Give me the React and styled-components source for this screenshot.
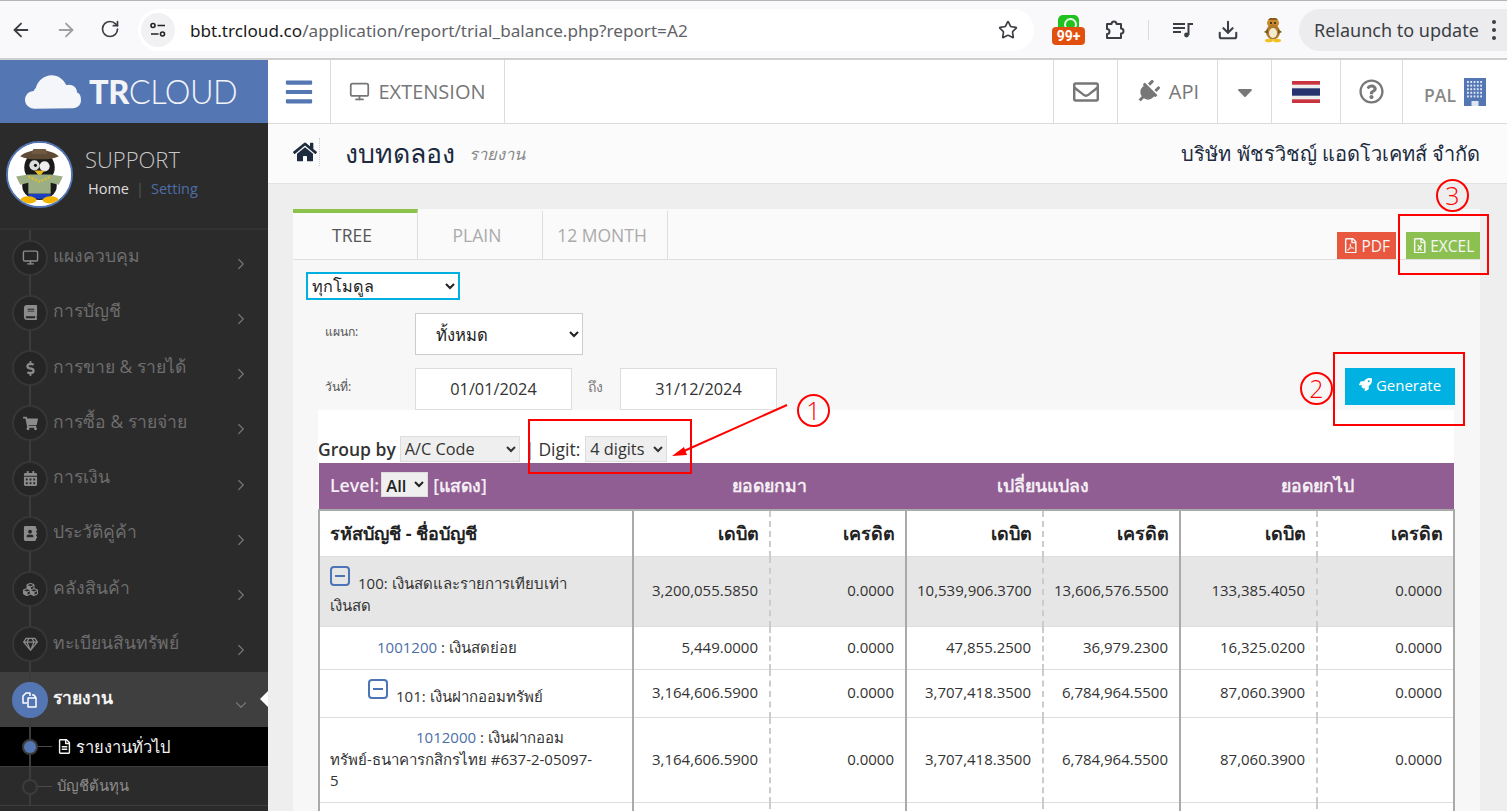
import React from 'react';
import styled, { createGlobalStyle } from 'styled-components';
import { ArrowLeft, ArrowRight, RotateCw, Star, Download, Monitor, ChevronRight, ChevronDown } from 'lucide-react';
import {
  FaHome, FaPlug, FaRocket, FaShoppingCart, FaDollarSign, FaBook, FaCubes, FaRegEnvelope,
  FaRegQuestionCircle, FaBars, FaRegFilePdf, FaRegFileExcel, FaRegFileAlt,
  FaCalendarAlt, FaAddressBook, FaRegGem, FaCaretDown,
} from 'react-icons/fa';

const SANS = `'Open Sans', 'Noto Sans', sans-serif`;

const Global = createGlobalStyle`
  html, body { margin: 0; padding: 0; height: 100%; overflow: hidden; }
  body { font-family: ${SANS}; font-size: 15px; color: #333; background: #eee; }
  * { box-sizing: border-box; }
`;

const Screen = styled.div`
  position: relative;
  width: 1507px;
  height: 811px;
  overflow: hidden;
  display: flex;
  flex-direction: column;
`;

/* browser chrome */
const Toolbar = styled.div`
  flex: 0 0 60px;
  display: flex;
  align-items: center;
  background: #f9f9fb;
  border-top: 1px solid #b5b5b5;
  border-bottom: 2px solid #cfcfcf;
  padding: 1px 0 0 10px;
  color: #3b3f44;
`;

const NavBtn = styled.div`
  width: 22px;
  height: 22px;
  margin-right: ${p => p.$gap ?? 23}px;
  color: ${p => p.$dim ? '#a0a0a0' : '#3b3f44'};
  display: flex;
`;

const Omnibox = styled.div`
  flex: 0 0 896px;
  height: 42px;
  margin-left: -1px;
  background: #fff;
  border-radius: 21px;
  display: flex;
  align-items: center;
  padding: 0 16px 0 3px;
  font-family: 'Noto Sans', sans-serif;
  font-size: 17.15px;
`;

const TuneBadge = styled.div`
  width: 34px;
  height: 34px;
  border-radius: 50%;
  background: #f1f1f3;
  display: flex;
  align-items: center;
  justify-content: center;
  margin-right: 15px;
`;

const Host = styled.span` color: #1a1a1a; `;
const UrlPath = styled.span` color: #5f6368; flex: 1; `;

const ExtIcons = styled.div`
  display: flex;
  align-items: center;
  flex: 1;
  margin-left: 18px;
`;

const ExtBadge = styled.div`
  position: relative;
  width: 34px;
  height: 30px;
  margin-right: 17px;
`;

const LineTop = styled.div`
  position: absolute;
  left: 6px;
  top: 0;
  width: 21px;
  height: 14px;
  background: #1fc21f;
  border-radius: 5px 5px 0 0;
  &::after {
    content: '';
    position: absolute;
    left: 6px;
    top: 3px;
    width: 9px;
    height: 9px;
    border: 2px solid #e9fbe9;
    border-radius: 50%;
  }
`;

const Count = styled.div`
  position: absolute;
  left: 0;
  bottom: 0;
  width: 33px;
  height: 18px;
  border-radius: 4px;
  background: #e2500f;
  color: #fff;
  font-family: 'Roboto', sans-serif;
  font-weight: 700;
  font-size: 14px;
  line-height: 18px;
  text-align: center;
`;

const ToolSep = styled.div`
  width: 1px;
  height: 20px;
  background: #dcdcdc;
  margin: 0 24px 0 23px;
`;

const MusicSlot = styled.div`
  display: flex;
  margin-right: 24px;
`;

const AvatarSlot = styled.div`
  display: flex;
`;

const Relaunch = styled.div`
  margin-left: 15px;
  flex: 0 0 208px;
  height: 42px;
  border-radius: 21px 0 0 21px;
  background: #ececee;
  display: flex;
  align-items: center;
  padding-left: 15px;
  font-family: 'Noto Sans', sans-serif;
  font-size: 18px;
  color: #3b3f44;
`;

const Dots = styled.div`
  margin-left: 13px;
  display: flex;
  flex-direction: column;
  gap: 4px;
  span { width: 4px; height: 4px; border-radius: 50%; background: #3b3f44; }
`;

/* page */
const Page = styled.div`
  flex: 1;
  display: flex;
  min-height: 0;
`;

const Sidebar = styled.aside`
  flex: 0 0 268px;
  background: #2b2b2b;
  display: flex;
  flex-direction: column;
`;

const Logo = styled.div`
  flex: 0 0 63px;
  background: #5476b3;
  display: flex;
  align-items: center;
  padding-left: 25px;
  color: #f2f4f8;
  font-family: 'Lato', 'Open Sans', sans-serif;
  font-size: 32.5px;
  letter-spacing: -0.5px;
  b { font-weight: 900; margin-left: 8px; }
  span { font-weight: 300; }
`;

const Profile = styled.div`
  flex: 0 0 107px;
  display: flex;
  padding: 18px 0 0 6px;
  border-bottom: 2px solid #333;
`;

const Avatar = styled.div`
  width: 67px;
  height: 67px;
  border-radius: 50%;
  border: 2px solid #5476b3;
  background: #fff;
  overflow: hidden;
  margin-right: 12px;
  svg { display: block; }
`;

const UserName = styled.div`
  font-size: 22px;
  font-weight: 300;
  color: #c8c8c8;
  line-height: 30px;
  margin-top: 3px;
`;

const UserLinks = styled.div`
  font-size: 14.5px;
  color: #ddd;
  padding-left: 3px;
  margin-top: 5px;
  i { font-style: normal; color: #555; margin: 0 7px; }
  a { color: #4d6ea8; }
`;

const Menu = styled.div`
  flex: 1;
  overflow: hidden;
`;

const MenuRow = styled.div`
  position: relative;
  height: ${p => p.$active ? 55 : 55.25}px;
  display: flex;
  align-items: center;
  padding-left: 12px;
  color: ${p => p.$active ? '#f4f4f4' : '#6e6e6e'};
  background: ${p => p.$active ? '#3f3f3f' : 'transparent'};
  font-size: 17.5px;
  font-weight: ${p => p.$active ? 600 : 400};
  &::before {
    content: '';
    position: absolute;
    left: 29px;
    top: 0;
    bottom: 0;
    width: 2px;
    background: #3c3c3c;
  }
`;

const Bullet = styled.div`
  position: relative;
  width: 36px;
  height: 36px;
  border-radius: 50%;
  background: ${p => p.$active ? '#5476b3' : '#252525'};
  border: 2px solid ${p => p.$active ? '#5476b3' : '#363636'};
  color: ${p => p.$active ? '#fff' : '#8c8c8c'};
  display: flex;
  align-items: center;
  justify-content: center;
  margin-right: 5px;
  font-size: 15px;
`;

const MenuLabel = styled.span`
  flex: 1;
  margin-top: -3px;
`;

const Chevron = styled.span`
  color: #757575;
  width: 36px;
  display: flex;
  margin-top: ${p => p.$open ? 11 : 12}px;
`;

const Notch = styled.div`
  position: absolute;
  right: 0;
  top: 19px;
  width: 0;
  height: 0;
  border-top: 8px solid transparent;
  border-bottom: 8px solid transparent;
  border-right: 8px solid #fff;
`;

const SubRow = styled.div`
  position: relative;
  height: ${p => p.$active ? 40 : 39}px;
  display: flex;
  align-items: center;
  padding-left: 57px;
  font-size: ${p => p.$active ? 16.5 : 14.8}px;
  color: ${p => p.$active ? '#f4f4f4' : '#8d8d8d'};
  background: ${p => p.$active ? '#000' : '#2b2b2b'};
  border-bottom: 1px solid #3d3d3d;
  svg { margin-right: 4px; }
  &::before {
    content: '';
    position: absolute;
    left: 29px;
    top: 0;
    bottom: 0;
    width: 2px;
    background: #3c3c3c;
  }
  &::after {
    content: '';
    position: absolute;
    left: 24px;
    top: 14px;
    width: 12px;
    height: 12px;
    border-radius: 50%;
    background: ${p => p.$active ? '#5476b3' : '#2b2b2b'};
    box-shadow: 0 0 0 2px #3c3c3c;
  }
`;

const SubTick = styled.span`
  position: absolute;
  left: 36px;
  top: 19px;
  width: 16px;
  height: 1px;
  background: #4a4a4a;
`;

const Main = styled.main`
  flex: 1;
  display: flex;
  flex-direction: column;
  min-width: 0;
`;

const TopNav = styled.div`
  flex: 0 0 64px;
  display: flex;
  background: #fff;
  border-bottom: 1px solid #dcdcdc;
  color: #777;
`;

const NavCell = styled.div`
  flex: 0 0 ${p => p.$w}px;
  display: flex;
  align-items: center;
  justify-content: center;
  gap: ${p => p.$gap || 0}px;
  border-right: ${p => p.$last ? 'none' : '1px solid #dcdcdc'};
  border-left: ${p => p.$first ? '1px solid #dcdcdc' : 'none'};
  font-size: 20px;
`;

const NavSpacer = styled.div` flex: 1; `;

const Burger = styled(FaBars)`
  color: #5476b3;
  font-size: 30px;
`;

const PlugIcon = styled(FaPlug)`
  transform: rotate(45deg);
`;

const OrgName = styled.span`
  font-size: 17.5px;
  font-weight: 600;
  color: #888;
  margin-top: 6px;
`;

const TitleBar = styled.div`
  flex: 0 0 60px;
  background: #fbfbfb;
  border-bottom: 1px solid #e3e3e3;
  display: flex;
  align-items: center;
  padding: 0 27px 0 25px;
  color: #1c2b3e;
`;

const HomeBtn = styled.div`
  font-size: 24px;
  width: 27px;
  height: 28px;
  display: flex;
  align-items: center;
  border-right: 1px dotted #ccc;
  margin-right: 25px;
  margin-top: -4px;
`;

const PageTitle = styled.h1`
  margin: 0 14px 0 0;
  font-size: 26.7px;
  font-weight: 400;
`;

const PageSub = styled.span`
  font-style: italic;
  font-size: 16.5px;
  color: #8a8a8a;
  flex: 1;
`;

const Company = styled.span`
  font-size: 20px;
`;

const Content = styled.div`
  flex: 1;
  padding: 25px 27px 0 25px;
  background: #eee;
  min-height: 0;
`;

const Panel = styled.div`
  background: #f7f7f7;
  height: 100%;
`;

const TabRow = styled.div`
  height: 51px;
  display: flex;
  background: #fafafa;
  border-bottom: 1px solid #dedede;
`;

const Tab = styled.div`
  flex: 0 0 125px;
  display: flex;
  align-items: center;
  justify-content: center;
  border-right: 1px solid #dedede;
  border-top: 4px solid ${p => p.$active ? '#8bc34a' : 'transparent'};
  background: ${p => p.$active ? '#fafafa' : 'transparent'};
  color: ${p => p.$active ? '#555' : '#aaa'};
  font-size: 17.5px;
  padding: 0 6px 3px 0;
`;

const ExportGroup = styled.div`
  margin-left: auto;
  align-self: flex-end;
  display: flex;
  gap: 10px;
`;

const ExportBtn = styled.div`
  width: ${p => p.$w}px;
  height: 27px;
  background: ${p => p.$bg};
  color: #f5f5f5;
  font-size: 15.5px;
  display: flex;
  align-items: center;
  justify-content: center;
  gap: 3px;
`;

const ModuleSelect = styled.select`
  display: block;
  width: 154px;
  height: 28px;
  margin: 12px 0 0 13px;
  border: 2px solid #00b0e0;
  background: #fff;
  border-radius: 0;
  font-family: ${SANS};
  font-size: 16.2px;
  color: #222;
`;

const FormRow = styled.div`
  display: flex;
  align-items: flex-start;
  margin-top: ${p => p.$mt}px;
  padding-left: 32px;
  padding-right: 25px;
`;

const FormLabel = styled.label`
  flex: 0 0 90px;
  font-size: 12.2px;
  color: #555;
  padding-top: 9px;
`;

const DeptSelect = styled.select`
  width: 168px;
  height: 42px;
  border: 1px solid #ccc;
  background: #fff;
  border-radius: 0;
  padding-left: 16px;
  font-family: ${SANS};
  font-size: 16.6px;
  color: #222;
`;

const DateInput = styled.input`
  width: ${p => p.$w}px;
  height: 42px;
  border: 1px solid #ddd;
  background: #fff;
  text-align: center;
  font-family: ${SANS};
  font-size: 16.3px;
  color: #333;
`;

const ToLabel = styled.span`
  width: 48px;
  font-size: 14px;
  color: #777;
  padding: 8px 0 0 16px;
`;

const GenerateBtn = styled.div`
  margin-left: auto;
  width: 110px;
  height: 37px;
  background: #00b1e1;
  color: #fff;
  display: flex;
  align-items: center;
  justify-content: center;
  gap: 4px;
  font-size: 15px;
  padding-bottom: 4px;
`;

const ReportArea = styled.div`
  margin: 0 26px 0 25px;
  background: #fff;
  padding-top: 26px;
  height: 420px;
`;

const GroupBar = styled.div`
  display: flex;
  align-items: center;
  height: 26px;
  font-size: 17.5px;
  color: #333;
  margin-bottom: 1px;
  strong { font-weight: 600; margin-right: 4px; }
`;

const SmallSelect = styled.select`
  width: ${p => p.$w}px;
  height: 26px;
  border: 1px solid #ddd;
  background: #efefef;
  border-radius: 0;
  font-family: ${SANS};
  font-size: 16.3px;
  color: #333;
`;

const Pipe = styled.span`
  margin: 0 4px 0 5px;
  color: #3a5e9f;
  font-weight: 600;
`;

const DigitLabel = styled.span`
  margin-right: 5px;
`;

const Report = styled.table`
  width: 1135px;
  border-collapse: collapse;
  table-layout: fixed;
  font-size: 15px;
  color: #333;
`;

const Col = styled.col`
  width: ${p => p.$w}px;
`;

const HeadBand = styled.tr`
  background: #905e92;
  color: #f4eef4;
  height: 47px;
  th { font-weight: 600; font-size: 17.7px; border-bottom: 2px solid #aaa; }
`;

const LevelCell = styled.th`
  text-align: left;
  padding-left: 11px;
  white-space: nowrap;
`;

const LevelSelect = styled.select`
  width: 47px;
  height: 25px;
  margin: 0 5px 0 2px;
  border: 1px solid #ddd;
  background: #efefef;
  border-radius: 0;
  font-family: ${SANS};
  font-size: 16.5px;
  font-weight: 600;
  color: #222;
`;

const Cell = styled.td`
  text-align: ${p => p.$left ? 'left' : 'right'};
  padding: 0 10px;
  padding-right: ${p => p.$left ? 36 : 11}px;
  border-top: 1px solid #ddd;
  border-right: ${p => p.$dash ? '2px dashed #ccc' : '2px solid #aaa'};
  border-left: ${p => p.$left ? '2px solid #aaa' : 'none'};
  line-height: 21.5px;
  vertical-align: middle;
`;

const HeadCell = styled(Cell)`
  font-weight: 700;
  font-size: 18px;
  color: #222;
  border-top: none;
  padding-right: 10px;
`;

const Row = styled.tr`
  height: ${p => p.$h}px;
  background: ${p => p.$shade ? '#e6e6e6' : '#fff'};
`;

const Indent = styled.span`
  display: inline-block;
  width: ${p => p.$w}px;
`;

const Code = styled.a`
  color: #4d6ea8;
`;

const Minus = styled.span`
  display: inline-block;
  width: 20px;
  height: 20px;
  border: 2px solid #4d74b5;
  border-radius: 4px;
  position: relative;
  margin-right: 8px;
  vertical-align: 3px;
  &::after {
    content: '';
    position: absolute;
    left: 3px;
    right: 3px;
    top: 7px;
    height: 2px;
    background: #4d74b5;
  }
`;

/* hand drawn annotations on top of the screenshot */
const RedBox = styled.div`
  position: absolute;
  left: ${p => p.$x}px;
  top: ${p => p.$y}px;
  width: ${p => p.$w}px;
  height: ${p => p.$h}px;
  border: 2px solid #f00;
`;

const RedNum = styled.div`
  position: absolute;
  left: ${p => p.$x}px;
  top: ${p => p.$y}px;
  width: 33px;
  height: 33px;
  border: 2px solid #f00;
  border-radius: 50%;
  color: #f00;
  font-family: 'Open Sans', sans-serif;
  font-weight: 300;
  font-size: 25px;
  line-height: 28px;
  text-align: center;
`;

const ArrowLayer = styled.svg`
  position: absolute;
  left: 0;
  top: 0;
  pointer-events: none;
`;

function TuneIcon() {
  return (
    <svg width="18" height="18" viewBox="0 0 18 18" fill="none" stroke="#222" strokeWidth="1.6">
      <circle cx="4" cy="4.5" r="2" />
      <path d="M8.5 4.5H16M2 13h7.5" />
      <circle cx="13.5" cy="13" r="2" />
    </svg>
  );
}

function PuzzleIcon() {
  return (
    <svg width="22" height="22" viewBox="0 0 22 22" fill="none" stroke="#3b3f44" strokeWidth="2" strokeLinejoin="round">
      <path d="M4 5h4.5a2.5 2.5 0 0 1 5 0H18v4.5a2.5 2.5 0 0 1 0 5V19H4v-4a2.5 2.5 0 0 0 0-5z" />
    </svg>
  );
}

function MusicIcon() {
  return (
    <svg width="20" height="16" viewBox="0 0 20 16" fill="none" stroke="#3b3f44" strokeWidth="2">
      <path d="M0 2h12M0 6h12M0 10h8M15.5 13V2h4.5" />
      <circle cx="13.5" cy="13" r="2.4" fill="#3b3f44" stroke="none" />
    </svg>
  );
}

function TinyTux() {
  return (
    <svg width="22" height="26" viewBox="0 0 22 26">
      <ellipse cx="11" cy="6" rx="6" ry="5" fill="#c98a2c" />
      <path d="M6 3 8 1h6l2 2z" fill="#8a5a1c" />
      <ellipse cx="11" cy="15" rx="7" ry="7.5" fill="#b07a2a" />
      <ellipse cx="11" cy="16" rx="4" ry="5" fill="#f3ead0" />
      <path d="M2 15l4-3v5zM20 15l-4-3v5z" fill="#7a5a20" />
      <ellipse cx="7" cy="23.5" rx="4" ry="1.8" fill="#f0c020" />
      <ellipse cx="15" cy="23.5" rx="4" ry="1.8" fill="#f0c020" />
      <circle cx="9" cy="6" r="1" fill="#222" />
      <circle cx="13" cy="6" r="1" fill="#222" />
    </svg>
  );
}

function Tux() {
  return (
    <svg width="63" height="63" viewBox="0 0 62 62">
      <rect width="62" height="62" fill="#fff" />
      <ellipse cx="31" cy="24" rx="15" ry="15" fill="#1a1a1a" />
      <ellipse cx="31" cy="42" rx="17" ry="14" fill="#1a1a1a" />
      <ellipse cx="26" cy="22" rx="5" ry="5" fill="#ddd" />
      <ellipse cx="36" cy="23" rx="5" ry="5" fill="#eee" />
      <circle cx="27" cy="22" r="1.5" fill="#111" />
      <path d="M12 13c4-3 10-6 19-6s15 3 19 6c-6 3-12 3-19 3s-13 0-19-3z" fill="#5e4a35" />
      <path d="M23 11l2-5h12l2 5z" fill="#6e5a42" />
      <path d="M26 27h10l-5 6z" fill="#e8b820" />
      <path d="M8 33l12-2h22l12 2-4 8-8-2v11H20V39l-8 2z" fill="#9caf84" />
      <path d="M20 33l11 5 11-5" fill="none" stroke="#e8c020" strokeWidth="2" strokeDasharray="2 1.5" />
      <rect x="20" y="50" width="22" height="5" fill="#1c3fbf" />
      <ellipse cx="20" cy="56" rx="8" ry="3.5" fill="#f2b400" />
      <ellipse cx="42" cy="56" rx="8" ry="3.5" fill="#f2b400" />
    </svg>
  );
}

function Cloud() {
  return (
    <svg width="56" height="36" viewBox="0 0 57 36" fill="#f4f6fa">
      <path d="M10 35C4 35 0 31 0 26c0-5 4-9 9-9 0-1 1-2 2-3 2-8 9-13 16-13 7 0 12 4 15 10 1 0 2-.5 3-.5 4 0 8 3 8 8 3 1 4 4 4 8 0 5-4 8-8 8z" />
    </svg>
  );
}

function FilesIcon() {
  return (
    <svg width="18" height="18" viewBox="0 0 18 18" fill="none" stroke="#fff" strokeWidth="1.5" strokeLinejoin="round">
      <path d="M6 12H2V5l3-3h4v3" />
      <path d="M7 7h4l4 0v9H7z" fill="#5476b3" />
      <path d="M11 4h2l2 3" />
    </svg>
  );
}

function Flag() {
  return (
    <svg width="28" height="22" viewBox="0 0 28 22">
      <rect width="28" height="22" fill="#c9353f" />
      <rect y="3.7" width="28" height="14.6" fill="#eee" />
      <rect y="7.3" width="28" height="7.4" fill="#26336e" />
    </svg>
  );
}

function OfficeIcon() {
  const dots = [];
  for (let r = 0; r < 5; r++) {
    for (let c = 0; c < 5; c++) {
      dots.push(<rect key={`${r}-${c}`} x={3 + c * 3.3} y={3 + r * 3.6} width="1.8" height="2" fill="#dfe6f3" />);
    }
  }
  return (
    <svg width="22" height="28" viewBox="0 0 22 28">
      <rect width="22" height="28" fill="#5476b3" />
      {dots}
      <rect x="7.5" y="23" width="7" height="5" fill="#dfe6f3" />
    </svg>
  );
}

const menuItems = [
  { label: 'แผงควบคุม', icon: <Monitor size={17} /> },
  { label: 'การบัญชี', icon: <FaBook /> },
  { label: 'การขาย & รายได้', icon: <FaDollarSign /> },
  { label: 'การซื้อ & รายจ่าย', icon: <FaShoppingCart /> },
  { label: 'การเงิน', icon: <FaCalendarAlt /> },
  { label: 'ประวัติคู่ค้า', icon: <FaAddressBook /> },
  { label: 'คลังสินค้า', icon: <FaCubes /> },
  { label: 'ทะเบียนสินทรัพย์', icon: <FaRegGem /> },
];

const colWidths = [314, 137, 136, 137, 137, 137, 137];

const rows = [
  {
    h: 70, shade: true,
    name: <><Minus />100: เงินสดและรายการเทียบเท่าเงินสด</>,
    v: ['3,200,055.5850', '0.0000', '10,539,906.3700', '13,606,576.5500', '133,385.4050', '0.0000'],
  },
  {
    h: 43,
    name: <><Indent $w={47} /><Code>1001200</Code> : เงินสดย่อย</>,
    v: ['5,449.0000', '0.0000', '47,855.2500', '36,979.2300', '16,325.0200', '0.0000'],
  },
  {
    h: 48,
    name: <><Indent $w={38} /><Minus />101: เงินฝากออมทรัพย์</>,
    v: ['3,164,606.5900', '0.0000', '3,707,418.3500', '6,784,964.5500', '87,060.3900', '0.0000'],
  },
  {
    h: 85,
    name: <><Indent $w={86} /><Code>1012000</Code> : เงินฝากออมทรัพย์-ธนาคารกสิกรไทย #637-2-05097-5</>,
    v: ['3,164,606.5900', '0.0000', '3,707,418.3500', '6,784,964.5500', '87,060.3900', '0.0000'],
  },
];

export default function App() {
  return (
    <Screen>
      <Global />
      <Toolbar>
        <NavBtn><ArrowLeft size={22} /></NavBtn>
        <NavBtn $dim><ArrowRight size={22} /></NavBtn>
        <NavBtn $gap={19}><RotateCw size={20} /></NavBtn>
        <Omnibox>
          <TuneBadge><TuneIcon /></TuneBadge>
          <Host>bbt.trcloud.co</Host>
          <UrlPath>/application/report/trial_balance.php?report=A2</UrlPath>
          <Star size={20} color="#3b3f44" />
        </Omnibox>
        <ExtIcons>
          <ExtBadge>
            <LineTop />
            <Count>99+</Count>
          </ExtBadge>
          <PuzzleIcon />
          <ToolSep />
          <MusicSlot><MusicIcon /></MusicSlot>
          <NavBtn><Download size={22} strokeWidth={2.25} /></NavBtn>
          <AvatarSlot><TinyTux /></AvatarSlot>
          <Relaunch>
            Relaunch to update
            <Dots><span /><span /><span /></Dots>
          </Relaunch>
        </ExtIcons>
      </Toolbar>

      <Page>
        <Sidebar>
          <Logo>
            <Cloud />
            <b>TR</b><span>CLOUD</span>
          </Logo>
          <Profile>
            <Avatar><Tux /></Avatar>
            <div>
              <UserName>SUPPORT</UserName>
              <UserLinks>Home<i>|</i><a>Setting</a></UserLinks>
            </div>
          </Profile>
          <Menu>
            {menuItems.map(m => (
              <MenuRow key={m.label}>
                <Bullet>{m.icon}</Bullet>
                <MenuLabel>{m.label}</MenuLabel>
                <Chevron><ChevronRight size={18} strokeWidth={1.6} /></Chevron>
              </MenuRow>
            ))}
            <MenuRow $active>
              <Bullet $active><FilesIcon /></Bullet>
              <MenuLabel>รายงาน</MenuLabel>
              <Chevron $open><ChevronDown size={18} strokeWidth={1.6} /></Chevron>
              <Notch />
            </MenuRow>
            <SubRow $active><SubTick /><FaRegFileAlt size={15} />รายงานทั่วไป</SubRow>
            <SubRow><SubTick />บัญชีต้นทุน</SubRow>
          </Menu>
        </Sidebar>

        <Main>
          <TopNav>
            <NavCell $w={63}><Burger /></NavCell>
            <NavCell $w={174} $gap={8}><Monitor size={21} />EXTENSION</NavCell>
            <NavSpacer />
            <NavCell $w={65} $first><FaRegEnvelope size={26} /></NavCell>
            <NavCell $w={100} $gap={9}><PlugIcon size={24} />API</NavCell>
            <NavCell $w={54}><FaCaretDown size={24} /></NavCell>
            <NavCell $w={69}><Flag /></NavCell>
            <NavCell $w={62}><FaRegQuestionCircle size={25} /></NavCell>
            <NavCell $w={104} $last $gap={8}>
              <OrgName>PAL</OrgName>
              <OfficeIcon />
            </NavCell>
          </TopNav>

          <TitleBar>
            <HomeBtn><FaHome /></HomeBtn>
            <PageTitle>งบทดลอง</PageTitle>
            <PageSub>รายงาน</PageSub>
            <Company>บริษัท พัชรวิชญ์ แอดโวเคทส์ จำกัด</Company>
          </TitleBar>

          <Content>
            <Panel>
              <TabRow>
                <Tab $active>TREE</Tab>
                <Tab>PLAIN</Tab>
                <Tab>12 MONTH</Tab>
                <ExportGroup>
                  <ExportBtn $bg="#e9573f" $w={59}><FaRegFilePdf />PDF</ExportBtn>
                  <ExportBtn $bg="#8cc152" $w={74}><FaRegFileExcel />EXCEL</ExportBtn>
                </ExportGroup>
              </TabRow>

              <ModuleSelect defaultValue="all">
                <option value="all">ทุกโมดูล</option>
              </ModuleSelect>

              <FormRow $mt={13}>
                <FormLabel>แผนก:</FormLabel>
                <DeptSelect><option>ทั้งหมด</option></DeptSelect>
              </FormRow>

              <FormRow $mt={13}>
                <FormLabel>วันที่:</FormLabel>
                <DateInput $w={157} defaultValue="01/01/2024" />
                <ToLabel>ถึง</ToLabel>
                <DateInput $w={157} defaultValue="31/12/2024" />
                <GenerateBtn><FaRocket size={13} />Generate</GenerateBtn>
              </FormRow>

              <ReportArea>
                <GroupBar>
                  <strong>Group by</strong>
                  <SmallSelect $w={120}><option>A/C Code</option></SmallSelect>
                  <Pipe>|</Pipe>
                  <DigitLabel>Digit:</DigitLabel>
                  <SmallSelect $w={82}><option>4 digits</option></SmallSelect>
                </GroupBar>
                <Report>
                  <colgroup>
                    {colWidths.map((w, i) => <Col key={i} $w={w} />)}
                  </colgroup>
                  <tbody>
                    <HeadBand>
                      <LevelCell>
                        Level:<LevelSelect><option>All</option></LevelSelect>[แสดง]
                      </LevelCell>
                      <th colSpan={2}>ยอดยกมา</th>
                      <th colSpan={2}>เปลี่ยนแปลง</th>
                      <th colSpan={2}>ยอดยกไป</th>
                    </HeadBand>
                    <Row $h={46}>
                      <HeadCell $left>รหัสบัญชี - ชื่อบัญชี</HeadCell>
                      <HeadCell $dash>เดบิต</HeadCell>
                      <HeadCell>เครดิต</HeadCell>
                      <HeadCell $dash>เดบิต</HeadCell>
                      <HeadCell>เครดิต</HeadCell>
                      <HeadCell $dash>เดบิต</HeadCell>
                      <HeadCell>เครดิต</HeadCell>
                    </Row>
                    {rows.map((r, i) => (
                      <Row key={i} $h={r.h} $shade={r.shade}>
                        <Cell $left>{r.name}</Cell>
                        {r.v.map((val, j) => (
                          <Cell key={j} $dash={j % 2 === 0}>{val}</Cell>
                        ))}
                      </Row>
                    ))}
                    <Row $h={40}>
                      <Cell $left />
                      <Cell $dash /><Cell /><Cell $dash /><Cell /><Cell $dash /><Cell />
                    </Row>
                  </tbody>
                </Report>
              </ReportArea>
            </Panel>
          </Content>
        </Main>
      </Page>

      <RedBox $x={528} $y={419} $w={164} $h={55} />
      <RedBox $x={1333} $y={352} $w={132} $h={74} />
      <RedBox $x={1398} $y={214} $w={91} $h={61} />
      <RedNum $x={797} $y={394}>1</RedNum>
      <RedNum $x={1300} $y={372}>2</RedNum>
      <RedNum $x={1436} $y={179}>3</RedNum>
      <ArrowLayer width="1507" height="811">
        <path d="M787 405 L684 451" stroke="#f00" strokeWidth="2" fill="none" />
        <path d="M672 456 L684 447 L687 455 Z" fill="#f00" />
      </ArrowLayer>
    </Screen>
  );
}
